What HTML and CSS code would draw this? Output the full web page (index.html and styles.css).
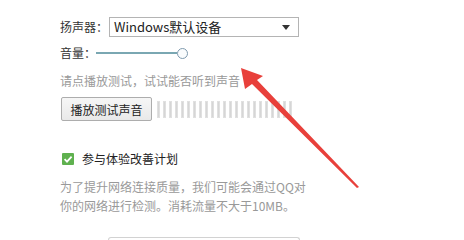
FILE: index.html
```html
<!DOCTYPE html>
<html lang="zh-CN">
<head>
<meta charset="utf-8">
<link rel="stylesheet" href="styles.css">
</head>
<body>
<div class="panel">
  <div class="row speaker">
    <span class="label">扬声器：</span>
    <div class="select"><span class="select-text">Windows默认设备</span><span class="caret"></span></div>
  </div>
  <div class="row volume">
    <span class="label">音量：</span>
    <div class="slider"><div class="track"></div><div class="thumb"></div></div>
  </div>
  <div class="hint">请点播放测试，试试能否听到声音</div>
  <div class="row test">
    <button class="btn">播放测试声音</button>
    <div class="meter">
      <i></i><i></i><i></i><i></i><i></i><i></i><i></i><i></i><i></i><i></i><i></i><i></i><i></i><i></i><i></i><i></i><i></i><i></i><i></i><i></i><i></i><i></i><i></i>
    </div>
  </div>
  <div class="row check">
    <svg class="cb" width="12" height="12" viewBox="0 0 12 12"><rect width="12" height="12" rx="1" fill="#5fb14f"/><polyline points="2.6,6.2 5,8.6 9.6,3.6" fill="none" stroke="#fff" stroke-width="1.8"/></svg>
    <span class="check-text">参与体验改善计划</span>
  </div>
  <p class="para">为了提升网络连接质量，我们可能会通过QQ对<br>你的网络进行检测。消耗流量不大于10MB。</p>
  <div class="bottom-box"></div>
</div>
<svg class="arrow" width="464" height="240" viewBox="0 0 464 240"><polygon points="241,68 263,76 257,80 359,187 357,188 252,84 245,89" fill="#e8403b"/></svg>
</body>
</html>
```
FILE: styles.css
```css
html, body {
  margin: 0;
  padding: 0;
  background: #fff;
}
body {
  width: 464px;
  height: 240px;
  overflow: hidden;
  position: relative;
  font-family: "Noto Sans CJK SC", "Noto Sans", sans-serif;
  font-size: 12px;
  color: #333;
}
.panel {
  padding: 17px 0 0 60px;
}
.row {
  display: flex;
  align-items: center;
}
.speaker {
  height: 20px;
}
.label {
  width: 49px;
  line-height: 16px;
}
.select {
  box-sizing: border-box;
  width: 190px;
  height: 20px;
  border: 1px solid #b4b4b4;
  display: flex;
  align-items: center;
  justify-content: space-between;
  padding: 0 8px 0 4px;
  background: #fff;
}
.select-text {
  font-size: 13px;
  line-height: 16px;
  color: #222;
}
.caret {
  width: 0;
  height: 0;
  border-left: 4px solid transparent;
  border-right: 4px solid transparent;
  border-top: 5px solid #333;
}
.volume {
  height: 16px;
  margin-top: 8px;
}
.volume .label {
  width: 36px;
}
.slider {
  display: flex;
  align-items: center;
  width: 92px;
}
.track {
  width: 81px;
  height: 2px;
  background: #7aa7b2;
}
.thumb {
  box-sizing: border-box;
  width: 11px;
  height: 11px;
  border: 1px solid #7f9aae;
  border-radius: 50%;
  background: #fafcfd;
}
.hint {
  margin-top: 12px;
  line-height: 16px;
  color: #999;
}
.test {
  margin-top: 8px;
  height: 24px;
}
.btn {
  box-sizing: border-box;
  margin: 0 0 0 1px;
  width: 91px;
  height: 24px;
  padding: 0;
  border: 1px solid #adadad;
  border-radius: 2px;
  background: linear-gradient(#f6f6f6, #e9e9e9);
  font-family: inherit;
  font-size: 12px;
  color: #222;
}
.meter {
  display: flex;
  gap: 3px;
  margin-left: 5px;
  height: 17px;
}
.meter i {
  display: block;
  box-sizing: border-box;
  width: 3px;
  height: 17px;
  background: #d6d6d6;
  border: 1px solid #e0e0e0;
}
.check {
  margin-top: 31px;
  height: 14px;
  padding-left: 2px;
}
.cb {
  display: block;
}
.check-text {
  margin-left: 8px;
  line-height: 14px;
  color: #222;
}
.para {
  margin: 11px 0 0 0;
  line-height: 19px;
  color: #999;
}
.bottom-box {
  box-sizing: border-box;
  margin: 22px 0 0 48px;
  width: 192px;
  height: 3px;
  border: 1px solid #d2d2d2;
  border-bottom: none;
  border-radius: 3px 3px 0 0;
}
.arrow {
  position: absolute;
  left: 0;
  top: 0;
}
```
